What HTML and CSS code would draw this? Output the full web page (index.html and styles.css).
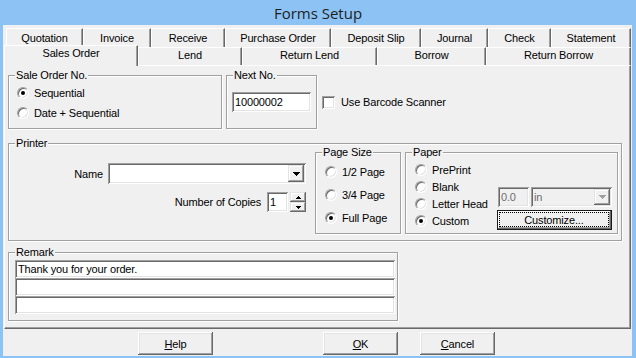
FILE: index.html
```html
<!DOCTYPE html>
<html lang="en">
<head>
  <meta charset="UTF-8">
  <title>Forms Setup</title>
  <link rel="stylesheet" href="styles.css">
</head>
<body>
  <div class="window">
    <div class="titlebar">Forms Setup</div>
    <div class="client">
      <div class="tabs">
        <div class="tabrow back">
          <div class="tab">Quotation</div>
          <div class="tab">Invoice</div>
          <div class="tab">Receive</div>
          <div class="tab">Purchase Order</div>
          <div class="tab">Deposit Slip</div>
          <div class="tab">Journal</div>
          <div class="tab">Check</div>
          <div class="tab">Statement</div>
        </div>
        <div class="tabrow front">
          <div class="tab active">Sales Order</div>
          <div class="tab">Lend</div>
          <div class="tab">Return Lend</div>
          <div class="tab">Borrow</div>
          <div class="tab">Return Borrow</div>
        </div>
      </div>

      <div class="panel">
        <div class="top-row">
          <div class="group sale-no">
            <span class="caption">Sale Order No.</span>
            <div class="option"><span class="radio on"></span>Sequential</div>
            <div class="option"><span class="radio"></span>Date + Sequential</div>
          </div>
          <div class="group next-no">
            <span class="caption">Next No.</span>
            <div class="field next-input">10000002</div>
          </div>
          <div class="check-row"><span class="checkbox"></span>Use Barcode Scanner</div>
        </div>

        <div class="group printer">
          <span class="caption">Printer</span>
          <div class="printer-fields">
            <div class="field-row name-row">
              <span class="label">Name</span>
              <div class="field combo">
                <div class="drop">
                  <svg width="7" height="4" viewBox="0 0 7 4"><path d="M0 0h7v1H0zM1 1h5v1H1zM2 2h3v1H2zM3 3h1v1H3z"/></svg>
                </div>
              </div>
            </div>
            <div class="field-row copies-row">
              <span class="label">Number of Copies</span>
              <div class="field copies">1</div>
              <div class="spinner">
                <div class="spin">
                  <svg width="5" height="3" viewBox="0 0 5 3"><path d="M2 0h1v1H2zM1 1h3v1H1zM0 2h5v1H0z"/></svg>
                </div>
                <div class="spin">
                  <svg width="5" height="3" viewBox="0 0 5 3"><path d="M0 0h5v1H0zM1 1h3v1H1zM2 2h1v1H2z"/></svg>
                </div>
              </div>
            </div>
          </div>

          <div class="group page-size">
            <span class="caption">Page Size</span>
            <div class="option"><span class="radio"></span>1/2 Page</div>
            <div class="option"><span class="radio"></span>3/4 Page</div>
            <div class="option"><span class="radio on"></span>Full Page</div>
          </div>

          <div class="group paper">
            <span class="caption">Paper</span>
            <div class="paper-options">
              <div class="option"><span class="radio"></span>PrePrint</div>
              <div class="option"><span class="radio"></span>Blank</div>
              <div class="option"><span class="radio"></span>Letter Head</div>
              <div class="option"><span class="radio on"></span>Custom</div>
            </div>
            <div class="paper-extra">
              <div class="unit-row">
                <div class="field disabled unit-value">0.0</div>
                <div class="field disabled unit-combo">in
                  <div class="drop off">
                    <svg width="7" height="4" viewBox="0 0 7 4"><path d="M0 0h7v1H0zM1 1h5v1H1zM2 2h3v1H2zM3 3h1v1H3z"/></svg>
                  </div>
                </div>
              </div>
              <div class="btn customize"><span class="focus">Customize...</span></div>
            </div>
          </div>
        </div>

        <div class="group remark">
          <span class="caption">Remark</span>
          <div class="field remark-line">Thank you for your order.</div>
          <div class="field remark-line"></div>
          <div class="field remark-line"></div>
        </div>
      </div>

      <div class="buttons">
        <div class="btn"><span><u>H</u>elp</span></div>
        <div class="btn ok"><span><u>O</u>K</span></div>
        <div class="btn cancel"><span><u>C</u>ancel</span></div>
      </div>
    </div>
  </div>
</body>
</html>
```

FILE: styles.css
```css
* {
  box-sizing: border-box;
}
body {
  margin: 0;
  font-family: "Liberation Sans", Arial, sans-serif;
  font-size: 11px;
  letter-spacing: -0.15px;
  color: #000;
}
.window {
  width: 636px;
  height: 358px;
  background: #8cc3f4;
  overflow: hidden;
}
.titlebar {
  height: 25px;
  display: flex;
  align-items: center;
  justify-content: center;
  font-family: "Open Sans", "Noto Sans", sans-serif;
  font-size: 15px;
  letter-spacing: 0;
  color: #1e1e1e;
}
.client {
  width: 629px;
  height: 331px;
  margin-left: 3px;
  padding-top: 3px;
  background: #f0f0f0;
}

/* tabs */
.tabrow {
  display: flex;
}
.tabrow.back {
  height: 19px;
  margin-left: 3px;
}
.tabrow.front {
  height: 18px;
  margin-left: 1px;
}
.tab {
  flex: none;
  text-align: center;
  white-space: nowrap;
  background: #f0f0f0;
  border-top: 1px solid #fff;
  border-left: 1px solid #fff;
  border-right: 1px solid #696969;
  box-shadow: inset -1px 0 #a0a0a0;
}
.back .tab {
  padding-top: 1px;
  line-height: 16px;
}
.front .tab {
  line-height: 15px;
}
.back .tab:nth-child(1) { width: 77px; }
.back .tab:nth-child(2) { width: 68px; }
.back .tab:nth-child(3) { width: 74px; }
.back .tab:nth-child(4) { width: 106px; }
.back .tab:nth-child(5) { width: 90px; }
.back .tab:nth-child(6) { width: 67px; }
.back .tab:nth-child(7) { width: 63px; }
.back .tab:nth-child(8) { width: 80px; }
.front .tab:nth-child(1) { width: 134px; }
.front .tab:nth-child(2) { width: 104px; }
.front .tab:nth-child(3) { width: 135px; }
.front .tab:nth-child(4) { width: 109px; }
.front .tab:nth-child(5) { width: 145px; }
.front .tab.active {
  position: relative;
  z-index: 1;
  height: 21px;
  margin-top: -2px;
}

/* tab page */
.panel {
  width: 627px;
  height: 264px;
  margin-left: 1px;
  padding: 9px 0 0 3px;
  border: 1px solid;
  border-color: #fff #696969 #696969 #fff;
  box-shadow: inset -1px -1px #a0a0a0;
}
.group {
  position: relative;
  border: 1px solid #a0a0a0;
  box-shadow: inset 1px 1px #fff, 1px 1px #fff;
}
.caption {
  position: absolute;
  top: -7px;
  left: 6px;
  padding: 0 1px;
  line-height: 13px;
  background: #f0f0f0;
  white-space: nowrap;
}
.option {
  display: flex;
  align-items: center;
  gap: 5px;
  height: 20px;
  white-space: nowrap;
}
.radio {
  position: relative;
  flex: none;
  width: 12px;
  height: 12px;
  border-radius: 50%;
  background: #fff;
  border: 1px solid;
  border-color: #a0a0a0 #fff #fff #a0a0a0;
  box-shadow: inset 1px 1px #696969, inset -1px -1px #e3e3e3;
}
.radio.on::after {
  content: "";
  position: absolute;
  left: 3px;
  top: 3px;
  width: 4px;
  height: 4px;
  border-radius: 50%;
  background: #000;
}
.field {
  display: flex;
  align-items: center;
  padding-left: 3px;
  background: #fff;
  box-shadow: inset 1px 1px #a0a0a0, inset -1px -1px #fff, inset 2px 2px #696969, inset -2px -2px #e3e3e3;
  white-space: nowrap;
}
.field.disabled {
  background: #f0f0f0;
  color: #6d6d6d;
}
.btn {
  display: flex;
  align-items: center;
  justify-content: center;
  background: #f0f0f0;
  box-shadow: inset -1px -1px #696969, inset 1px 1px #fff, inset -2px -2px #a0a0a0, inset 2px 2px #e3e3e3;
}

/* top row */
.top-row {
  display: flex;
  align-items: center;
}
.sale-no {
  width: 214px;
  height: 54px;
  padding: 7px 0 0 8px;
}
.next-no {
  width: 91px;
  height: 54px;
  margin-left: 4px;
  padding: 16px 0 0 5px;
}
.next-input {
  width: 79px;
  height: 20px;
}
.check-row {
  display: flex;
  align-items: center;
  gap: 6px;
  margin-left: 5px;
}
.checkbox {
  width: 13px;
  height: 13px;
  background: #fff;
  box-shadow: inset 1px 1px #a0a0a0, inset -1px -1px #fff, inset 2px 2px #696969, inset -2px -2px #e3e3e3;
}

/* printer */
.printer {
  display: flex;
  width: 614px;
  height: 98px;
  margin-top: 14px;
  padding-top: 8px;
}
.printer-fields {
  width: 297px;
  display: flex;
  flex-direction: column;
  align-items: flex-end;
  padding-top: 11px;
}
.field-row {
  display: flex;
  align-items: center;
}
.name-row .label {
  margin-right: 5px;
}
.combo {
  width: 198px;
  height: 21px;
  padding-right: 2px;
  justify-content: flex-end;
}
.drop {
  width: 16px;
  height: 17px;
  display: flex;
  align-items: center;
  justify-content: center;
  background: #f0f0f0;
  box-shadow: inset -1px -1px #696969, inset 1px 1px #e3e3e3, inset -2px -2px #a0a0a0, inset 2px 2px #fff;
}
.drop svg {
  fill: #000;
}
.drop.off {
  margin-left: auto;
  height: 16px;
}
.drop.off svg {
  fill: #a0a0a0;
}
.copies-row {
  margin-top: 8px;
}
.copies-row .label {
  margin-right: 6px;
}
.copies {
  width: 21px;
  height: 20px;
}
.spinner {
  width: 16px;
  height: 20px;
  margin-left: 2px;
}
.spin {
  height: 10px;
  display: flex;
  align-items: center;
  justify-content: center;
  background: #f0f0f0;
  box-shadow: inset -1px -1px #696969, inset 1px 1px #e3e3e3, inset -2px -2px #a0a0a0, inset 2px 2px #fff;
}
.page-size {
  width: 86px;
  height: 82px;
  margin-left: 9px;
  padding: 7px 0 0 9px;
}
.page-size .option {
  height: 23px;
}
.paper {
  display: flex;
  width: 213px;
  height: 82px;
  margin-left: 4px;
  padding: 8px 0 0 9px;
}
.paper-options {
  width: 82px;
}
.paper .option {
  height: 17px;
}
.paper-extra {
  width: 115px;
  padding-top: 26px;
}
.unit-row {
  display: flex;
  gap: 2px;
  margin-left: 1px;
}
.unit-value {
  width: 31px;
  height: 20px;
}
.unit-combo {
  width: 81px;
  height: 20px;
  padding-right: 2px;
}
.customize {
  width: 115px;
  height: 20px;
  margin-top: 3px;
  border: 1px solid #1a1a1a;
  box-shadow: inset -1px -1px #696969, inset 1px 1px #fff, inset -2px -2px #a0a0a0;
}
.customize .focus {
  flex: 1;
  align-self: stretch;
  margin: 2px 3px 3px 2px;
  display: flex;
  align-items: center;
  justify-content: center;
  outline: 1px dotted #000;
}

/* remark */
.remark {
  width: 390px;
  height: 69px;
  margin-top: 11px;
  padding: 7px 0 0 6px;
}
.remark-line {
  width: 380px;
  height: 18px;
}

/* dialog buttons */
.buttons {
  display: flex;
  margin-top: 3px;
  padding-left: 135px;
}
.buttons .btn {
  width: 75px;
  height: 23px;
}
.buttons .ok {
  margin-left: 110px;
}
.buttons .cancel {
  margin-left: 22px;
}
```
